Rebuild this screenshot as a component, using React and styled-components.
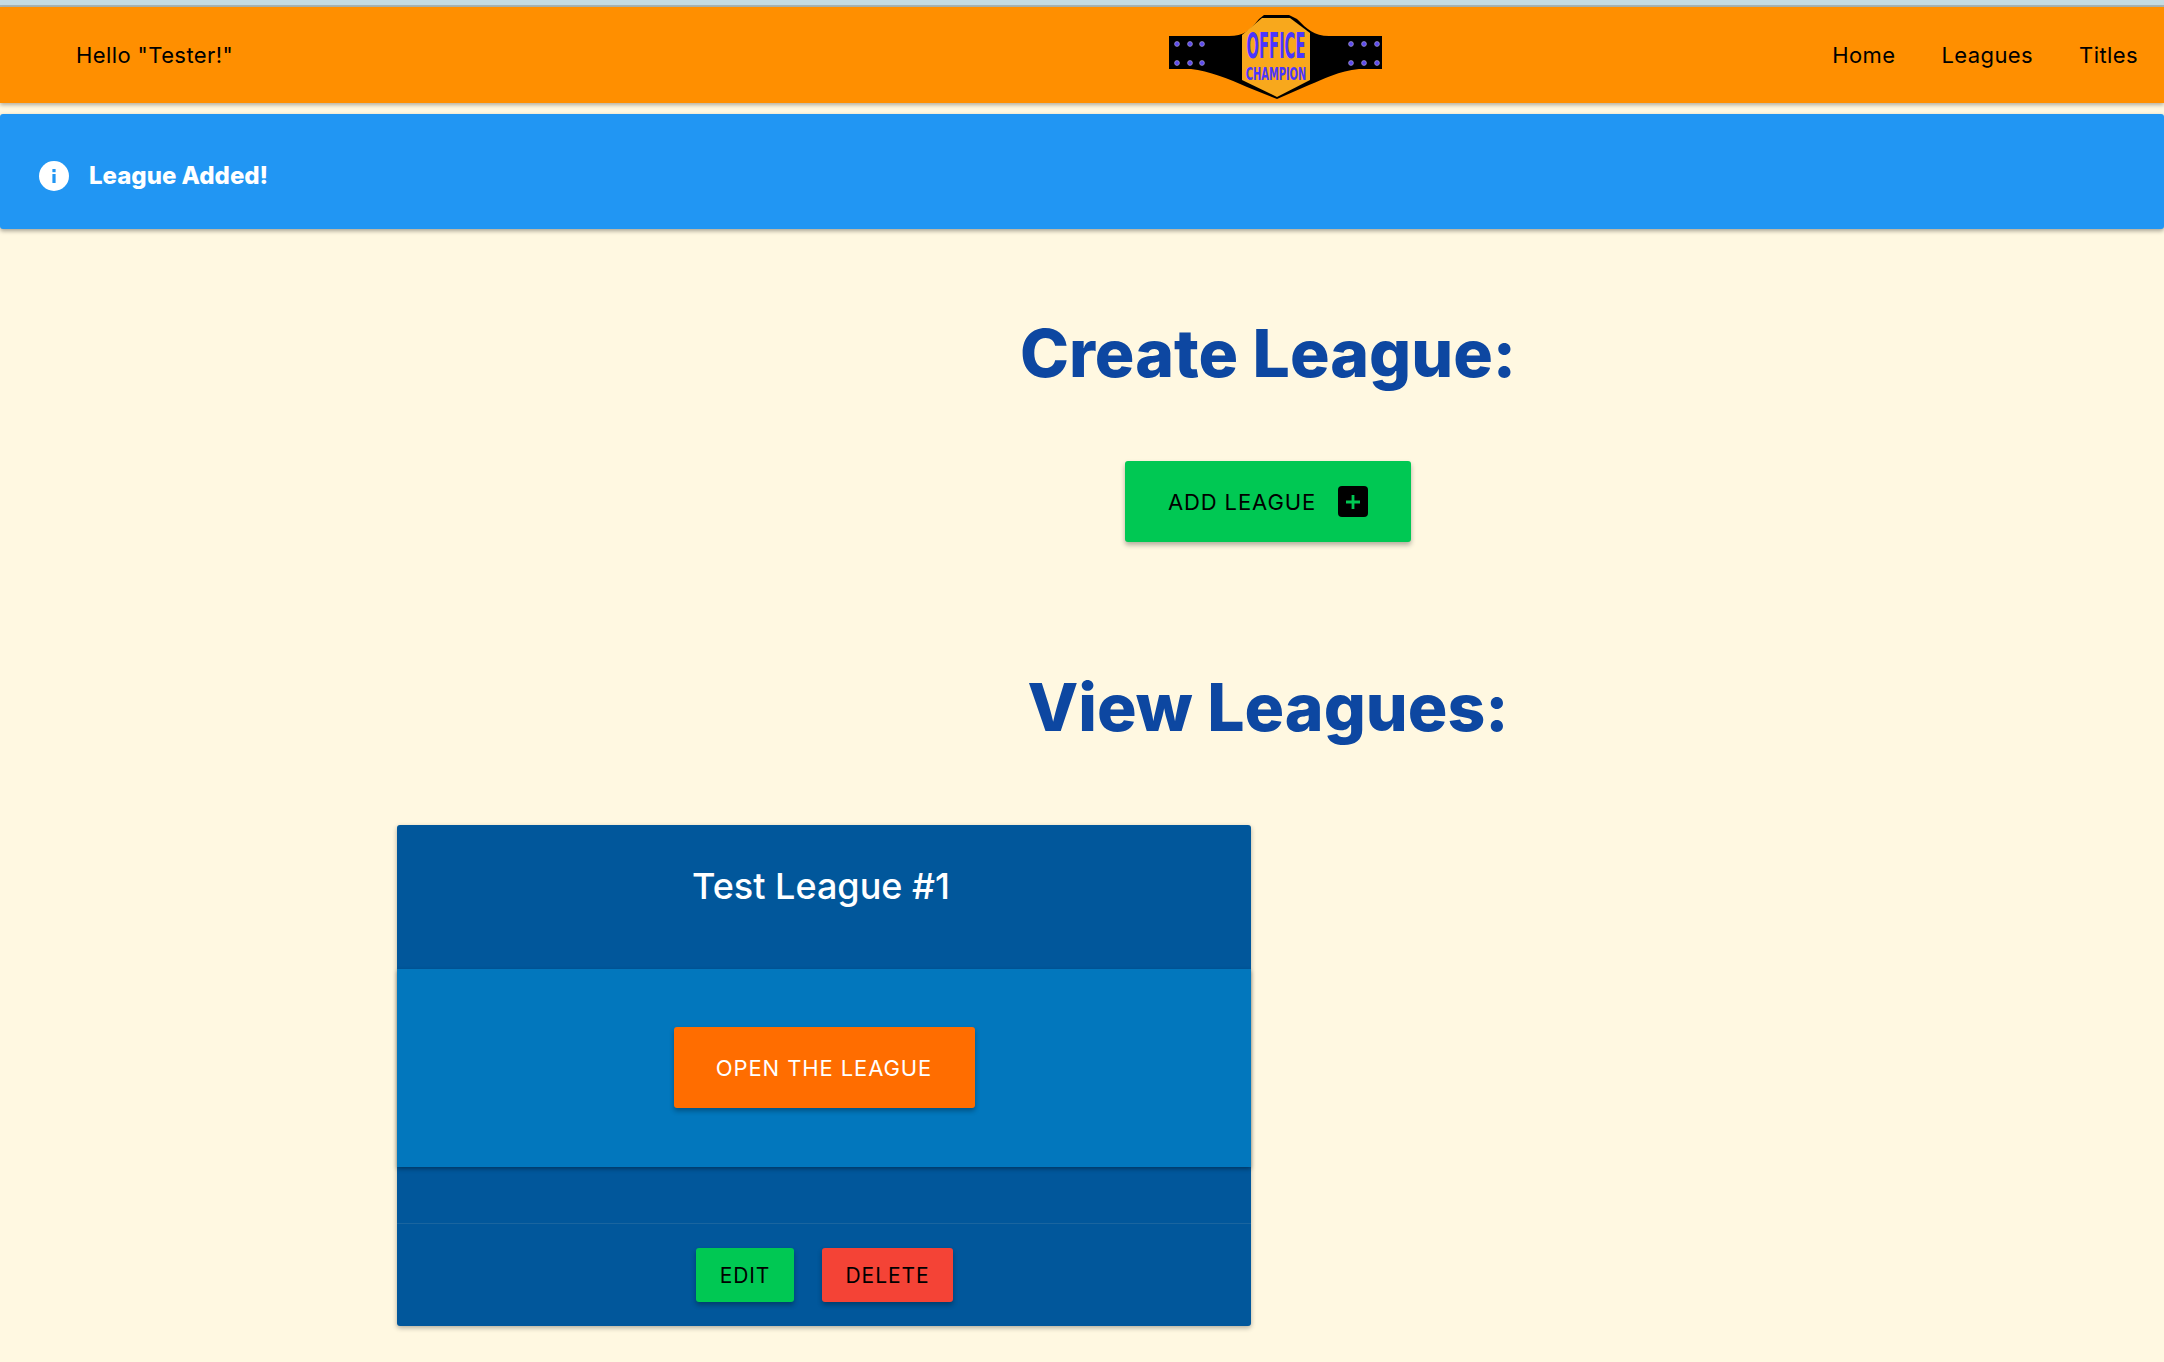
import React from 'react';
import styled, { createGlobalStyle } from 'styled-components';

const GlobalStyle = createGlobalStyle`
  html, body {
    margin: 0;
    padding: 0;
    background: #fff8e1;
    font-family: Inter, "Liberation Sans", sans-serif;
  }
`;

const Page = styled.div`
  width: 2164px;
  height: 1362px;
  overflow: hidden;
  background: #fff8e1;
`;

const TopStrip = styled.div`
  height: 5px;
  background: #c5dbe1;
  border-bottom: 2px solid #a9b5b3;
`;

const Header = styled.header`
  display: grid;
  grid-template-columns: 1169px 213px 1fr;
  align-items: center;
  height: 96px;
  background: #ff8f00;
  box-shadow: 0 2px 4px rgba(0, 0, 0, 0.3);
`;

const Greeting = styled.div`
  padding-left: 76px;
  font-size: 22px;
  letter-spacing: 0.4px;
  color: #000;
`;

const Nav = styled.nav`
  display: flex;
  justify-content: flex-end;
  gap: 46px;
  padding-right: 26px;
`;

const NavLink = styled.a`
  font-size: 22px;
  letter-spacing: 0.4px;
  color: #000;
`;

const Banner = styled.div`
  display: flex;
  align-items: center;
  gap: 20px;
  height: 115px;
  box-sizing: border-box;
  margin-top: 11px;
  padding: 8px 0 0 39px;
  background: #2196f3;
  border-radius: 3px;
  box-shadow: 0 2px 4px rgba(0, 0, 0, 0.35);
  color: #fff;
  font-size: 24px;
  font-weight: 800;
`;

const Main = styled.main`
  padding: 0 25px 0 397px;
`;

const Section = styled.section`
  display: flex;
  flex-direction: column;
  align-items: center;
`;

const Heading = styled.h1`
  margin: ${(p) => p.$top}px 0 0;
  font-size: 66px;
  line-height: 80px;
  font-weight: 800;
  color: #0d47a1;
`;

const Button = styled.button`
  display: inline-flex;
  align-items: center;
  justify-content: center;
  border: none;
  border-radius: 3px;
  padding: 0;
  width: ${(p) => p.$w}px;
  height: ${(p) => p.$h}px;
  background: ${(p) => p.$bg};
  color: ${(p) => p.$fg || '#000'};
  font-family: inherit;
  font-size: ${(p) => p.$size || 22}px;
  letter-spacing: 0.9px;
  text-transform: uppercase;
  box-shadow: 0 3px 5px rgba(0, 0, 0, 0.3);
`;

const AddButton = styled(Button)`
  gap: 22px;
  margin-top: 68px;
`;

const PlusBox = styled.span`
  display: flex;
  align-items: center;
  justify-content: center;
  width: 30px;
  height: 31px;
  background: #000;
  border-radius: 4px;
`;

const Cards = styled.div`
  display: flex;
  margin-top: 78px;
`;

const Card = styled.article`
  width: 854px;
  height: 501px;
  display: flex;
  flex-direction: column;
  background: #01579b;
  border-radius: 3px;
  box-shadow: 0 2px 5px rgba(0, 0, 0, 0.3);
`;

const CardTitle = styled.h2`
  height: 144px;
  margin: 0;
  padding-top: 39px;
  padding-right: 6px;
  box-sizing: border-box;
  text-align: center;
  font-size: 36px;
  line-height: 44px;
  font-weight: 500;
  color: #fff;
`;

const CardBody = styled.div`
  height: 198px;
  box-sizing: border-box;
  padding-bottom: 1px;
  display: flex;
  align-items: center;
  justify-content: center;
  background: #0277bd;
  box-shadow: 0 2px 4px rgba(0, 0, 0, 0.35);
`;

const CardFooter = styled.div`
  margin-top: 56px;
  flex: 1;
  display: flex;
  align-items: center;
  justify-content: center;
  gap: 28px;
  padding-left: 1px;
  border-top: 1px solid #1a659f;
`;

function BeltLogo() {
  const studs = [8, 21, 33, 182, 195, 208];
  return (
    <svg width="213" height="88" viewBox="0 0 213 88" aria-label="Office Champion">
      <path
        d="M0 25 H60 C75 25 80 20 90 8 L95 4 H120 L128 8 C138 18 145 25 160 25 H213 V58 H190 C170 60 155 68 140 74 L108 88 L78 76 C60 68 40 60 22 58 H0 Z"
        fill="#000"
      />
      <path d="M93 7 H121 L141 22 V69 L108 86 L73 69 V24 Z" fill="#f8a81c" />
      {/* small font stretched upward, the belt lettering is tall and narrow */}
      <text
        transform="translate(107 47) scale(0.98 2.4)"
        textAnchor="middle"
        fontFamily='"DejaVu Sans", sans-serif'
        fontWeight="700"
        fontSize="15"
        fill="#4a35ff"
      >
        OFFICE
      </text>
      <text
        transform="translate(107 69) scale(0.76 1.3)"
        textAnchor="middle"
        fontFamily='"DejaVu Sans", sans-serif'
        fontWeight="700"
        fontSize="13"
        fill="#4a35ff"
      >
        CHAMPION
      </text>
      {studs.map((x) =>
        [33, 52].map((y) => (
          <circle key={`${x}-${y}`} cx={x} cy={y} r="2.4" fill="#5a48f0" stroke="#9a92c8" strokeWidth="0.8" />
        ))
      )}
    </svg>
  );
}

function InfoIcon() {
  return (
    <svg width="30" height="30" viewBox="0 0 30 30">
      <circle cx="15" cy="15" r="15" fill="#fff" />
      <rect x="13.4" y="13" width="3.2" height="9" fill="#2196f3" />
      <rect x="13.4" y="8" width="3.2" height="3.2" fill="#2196f3" />
    </svg>
  );
}

function PlusIcon() {
  return (
    <svg width="16" height="16" viewBox="0 0 16 16">
      <path d="M8 1 V15 M1 8 H15" stroke="#00c853" strokeWidth="2.8" fill="none" />
    </svg>
  );
}

export default function App() {
  return (
    <Page>
      <GlobalStyle />
      <TopStrip />
      <Header>
        <Greeting>Hello "Tester!"</Greeting>
        <BeltLogo />
        <Nav>
          <NavLink>Home</NavLink>
          <NavLink>Leagues</NavLink>
          <NavLink>Titles</NavLink>
        </Nav>
      </Header>
      <Banner>
        <InfoIcon />
        League Added!
      </Banner>
      <Main>
        <Section>
          <Heading $top={84}>Create League:</Heading>
          <AddButton $w={286} $h={81} $bg="#00c853">
            Add League
            <PlusBox>
              <PlusIcon />
            </PlusBox>
          </AddButton>
          <Heading $top={125}>View Leagues:</Heading>
        </Section>
        <Cards>
          <Card>
            <CardTitle>Test League #1</CardTitle>
            <CardBody>
              <Button $w={301} $h={81} $bg="#ff6d00" $fg="#fff">
                Open the League
              </Button>
            </CardBody>
            <CardFooter>
              <Button $w={98} $h={54} $bg="#00c853" $size={21}>
                Edit
              </Button>
              <Button $w={131} $h={54} $bg="#f44336" $size={21}>
                Delete
              </Button>
            </CardFooter>
          </Card>
        </Cards>
      </Main>
    </Page>
  );
}
